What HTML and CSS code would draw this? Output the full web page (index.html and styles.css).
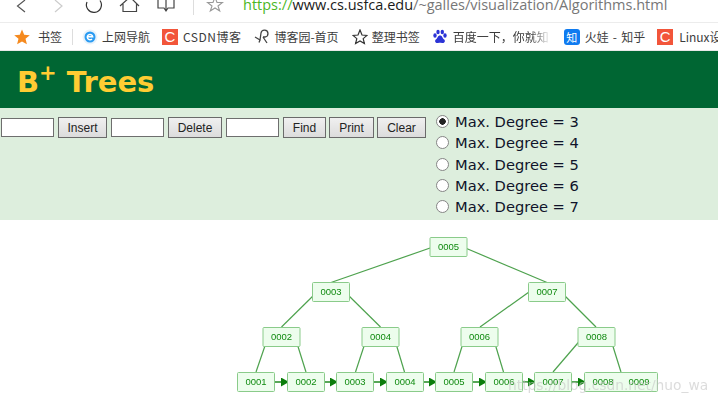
FILE: index.html
```html
<!DOCTYPE html>
<html lang="en">
<head>
<meta charset="utf-8">
<title>B+ Trees</title>
<link rel="stylesheet" href="styles.css">
</head>
<body>
<div class="toolbar">
  <svg class="tb-icons" width="200" height="22" viewBox="0 0 200 22" fill="none">
    <path d="M25 0 L17.500 6 L25 12" stroke="#555" stroke-width="1.200"/>
    <path d="M55 0 L62 6 L55 12" stroke="#ccc" stroke-width="1.200"/>
    <path d="M100 0.500 A7.500 7.500 0 1 1 87 2" stroke="#333" stroke-width="1.200"/>
    <path d="M120 6 L130 -3 L139 6 M123 4 V11.500 H136.500 V4" stroke="#444" stroke-width="1.200"/>
    <path d="M158 0 V8 H164 L166 11 L168 8 H174 V0 M166 0 V11" stroke="#444" stroke-width="1.200"/>
  </svg>
  <span class="tb-sep"></span>
  <svg class="tb-star" width="18" height="14" viewBox="0 0 18 14" fill="none"><path d="M9 -3 L11 2.500 L16.500 2.500 L12 6 L13.700 11 L9 8 L4.300 11 L6 6 L1.500 2.500 L7 2.500 Z" stroke="#999" stroke-width="1.100"/></svg>
  <span class="url"><span class="https">https</span><span class="slashes">://</span><span class="host">www.cs.usfca.edu</span><span class="path">/~galles/visualization/Algorithms.html</span></span>
</div>
<div class="bookmarks">
  <span class="bm bm-first"><svg width="16" height="16" viewBox="0 0 16 16"><path d="M8 0.500 L10.200 5.800 L15.800 6.200 L11.500 9.800 L12.900 15.300 L8 12.400 L3.100 15.300 L4.500 9.800 L0.200 6.200 L5.800 5.800 Z" fill="#f58a1f"/></svg><span class="bm-t">书签</span></span>
  <span class="bm-sep"></span>
  <span class="bm bm-e"><svg width="16" height="16" viewBox="0 0 16 16"><circle cx="8" cy="8" r="7.500" fill="#e9f3fb"/><circle cx="8" cy="8" r="5.500" fill="#2a9bf2"/><path d="M5.300 7.800 H10.700 A2.700 2.700 0 1 0 10 10" fill="none" stroke="#fff" stroke-width="1.500"/></svg><span class="bm-t">上网导航</span></span>
  <span class="bm bm-c"><span class="ci">C</span><span class="bm-t">CSDN博客</span></span>
  <span class="bm bm-cn"><svg width="16" height="16" viewBox="0 0 16 16" fill="none"><path d="M1 8 L6 11 L7 4 A3.500 3.500 0 1 1 11 8 L9 8 M9 8 L13 14 M6 11 L5 13.500" stroke="#444" stroke-width="1.300"/></svg><span class="bm-t">博客园-首页</span></span>
  <span class="bm bm-s"><svg width="16" height="16" viewBox="0 0 16 16" fill="none"><path d="M8 1 L10 6 L15 6.400 L11.200 9.600 L12.400 14.500 L8 11.900 L3.600 14.500 L4.800 9.600 L1 6.400 L6 6 Z" stroke="#333" stroke-width="1.200"/></svg><span class="bm-t">整理书签</span></span>
  <span class="bm bm-b"><svg width="14" height="16" viewBox="0 0 14 16" fill="#2b33d6"><ellipse cx="2" cy="6.500" rx="1.700" ry="2.200"/><ellipse cx="5" cy="3" rx="1.700" ry="2.200"/><ellipse cx="9.300" cy="3" rx="1.700" ry="2.200"/><ellipse cx="12" cy="6.500" rx="1.700" ry="2.200"/><path d="M7 6.500 C4.500 6.500 5 9 2.800 10.500 C1.200 12 2.500 14.500 5 14 C6.500 13.700 7.500 13.700 9 14 C11.500 14.500 12.800 12 11.200 10.500 C9 9 9.500 6.500 7 6.500 Z"/></svg><span class="bm-t bm-fade">百度一下，你就知</span></span>
  <span class="bm bm-z"><span class="zi">知</span><span class="bm-t">火娃 - 知乎</span></span>
  <span class="bm bm-l"><span class="ci">C</span><span class="bm-t">Linux设</span></span>
</div>
<header class="title"><h1>B<sup>+</sup> Trees</h1></header>
<section class="controls">
  <div class="actions">
    <input class="field" type="text" aria-label="Insert value">
    <button class="b-insert" type="button">Insert</button>
    <input class="field" type="text" aria-label="Delete value">
    <button class="b-delete" type="button">Delete</button>
    <input class="field" type="text" aria-label="Find value">
    <button class="b-find" type="button">Find</button>
    <button class="b-print" type="button">Print</button>
    <button class="b-clear" type="button">Clear</button>
  </div>
  <div class="degrees">
    <label class="degree"><input type="radio" name="deg" checked>Max. Degree = 3</label>
    <label class="degree"><input type="radio" name="deg">Max. Degree = 4</label>
    <label class="degree"><input type="radio" name="deg">Max. Degree = 5</label>
    <label class="degree"><input type="radio" name="deg">Max. Degree = 6</label>
    <label class="degree"><input type="radio" name="deg">Max. Degree = 7</label>
  </div>
</section>
<main class="canvas">
  <svg class="tree" width="718" height="182" viewBox="0 220 718 182">
    <defs>
      <marker id="arr" markerWidth="8" markerHeight="9" refX="7" refY="4.500" orient="auto" markerUnits="userSpaceOnUse"><path d="M0 0 L8 4.500 L0 9 Z" fill="#0a7d0a"/></marker>
    </defs>
    <g class="edges">
      <path d="M433 247 L331 282.500"/><path d="M463 247 L547 282.500"/>
      <path d="M317 292 L281.500 327"/><path d="M345 292 L380.500 327"/>
      <path d="M529 292 L480 327"/><path d="M561 292 L596 327"/>
      <path d="M268 337 L256 372"/><path d="M295 337 L306 372"/>
      <path d="M367 337 L355.500 372"/><path d="M394 337 L404.500 372"/>
      <path d="M465 337 L454 372"/><path d="M493 337 L503.500 372"/>
      <path d="M583 337 L553 372"/><path d="M610 337 L621 372"/>
    </g>
    <g class="links">
      <path d="M270 382 L288 382" marker-end="url(#arr)"/>
      <path d="M319 382 L337 382" marker-end="url(#arr)"/>
      <path d="M369 382 L387 382" marker-end="url(#arr)"/>
      <path d="M418 382 L436 382" marker-end="url(#arr)"/>
      <path d="M468 382 L486 382" marker-end="url(#arr)"/>
      <path d="M517 382 L535 382" marker-end="url(#arr)"/>
      <path d="M567 382 L585 382" marker-end="url(#arr)"/>
    </g>
    <g class="nodes">
      <rect x="430" y="237.500" width="37" height="19"/>
      <rect x="312.500" y="282.500" width="37" height="19"/><rect x="528.500" y="282.500" width="37" height="19"/>
      <rect x="263" y="327.500" width="37" height="19"/><rect x="362" y="327.500" width="37" height="19"/><rect x="461" y="327.500" width="37" height="19"/><rect x="578" y="327.500" width="37" height="19"/>
      <rect x="237.500" y="372.500" width="37" height="19"/><rect x="287.500" y="372.500" width="37" height="19"/><rect x="336.500" y="372.500" width="37" height="19"/><rect x="386.500" y="372.500" width="37" height="19"/><rect x="435.500" y="372.500" width="37" height="19"/><rect x="485.500" y="372.500" width="37" height="19"/><rect x="534.500" y="372.500" width="37" height="19"/><rect x="584.500" y="372.500" width="73" height="19"/>
    </g>
    <g class="labels">
      <text x="448.500" y="246.500">0005</text>
      <text x="331" y="291.500">0003</text><text x="547" y="291.500">0007</text>
      <text x="281.500" y="336.500">0002</text><text x="380.500" y="336.500">0004</text><text x="479.500" y="336.500">0006</text><text x="596.500" y="336.500">0008</text>
      <text x="256" y="381.500">0001</text><text x="306" y="381.500">0002</text><text x="355" y="381.500">0003</text><text x="405" y="381.500">0004</text><text x="454" y="381.500">0005</text><text x="504" y="381.500">0006</text><text x="553" y="381.500">0007</text><text x="603" y="381.500">0008</text><text x="639" y="381.500">0009</text>
    </g>
    <text class="watermark" x="508" y="390">https://blog.csdn.net/huo_wa</text>
  </svg>
</main>
</body>
</html>
```
FILE: styles.css
```css
html, body { margin: 0; padding: 0; background: #fff; }
body { width: 718px; height: 402px; overflow: hidden; font-family: "Liberation Sans", Arial, sans-serif; }

.toolbar { position: relative; height: 22px; background: #fff; border-bottom: 1px solid #ececec; overflow: hidden; }
.tb-icons { position: absolute; left: 0; top: 0; }
.tb-sep { position: absolute; left: 193px; top: 0; width: 1px; height: 15px; background: #ddd; }
.tb-star { position: absolute; left: 206px; top: 0; }
.url { position: absolute; left: 243px; top: -4px; font: 14.500px/18px "Open Sans", sans-serif; white-space: nowrap; }
.https { color: #4cb71f; }
.slashes { color: #4cb71f; }
.host { color: #1a1a1a; }
.path { color: #777; }

.bookmarks { display: flex; align-items: center; height: 27px; background: #fff; border-bottom: 1px solid #e8e8e8; overflow: hidden; white-space: nowrap; padding-left: 14px; font: 12px/16px "Noto Sans CJK SC", "Liberation Sans", sans-serif; color: #3c3c3c; }
.bm { display: inline-flex; align-items: center; flex: none; }
.bm-t { margin-left: 6px; }
.bm-first .bm-t { margin-left: 8px; }
.bm-e .bm-t, .bm-cn .bm-t, .bm-s .bm-t { margin-left: 4px; }
.bm-c .bm-t, .bm-z .bm-t { margin-left: 5px; }
.bm-c .bm-t { letter-spacing: 0.500px; }
.bm-z .bm-t { word-spacing: 1.500px; }
.bm-sep { width: 1px; height: 16px; background: #ddd; margin: 0 9px 0 10px; flex: none; }
.bm-c, .bm-l { margin-left: 12px; }
.bm-cn, .bm-s, .bm-b, .bm-z { margin-left: 13px; }
.ci { display: block; width: 16px; height: 16px; background: #f2553a; color: #fff; font: 15px/16px "Liberation Sans", sans-serif; text-align: center; }
.zi { display: block; width: 16px; height: 16px; border-radius: 3px; background: #0f7bf0; color: #fff; font: 11px/16px "Noto Sans CJK SC", sans-serif; text-align: center; }
.bm-fade { width: 98px; overflow: hidden; -webkit-mask-image: linear-gradient(90deg, #000 80%, transparent); mask-image: linear-gradient(90deg, #000 80%, transparent); }

.title { box-sizing: border-box; height: 57px; background: #006633; display: flex; align-items: center; padding: 4px 0 0 17px; }
.title h1 { margin: 0; color: #ffcc33; font: bold 29px/34px "DejaVu Sans", sans-serif; }
.title sup { font-size: 21px; line-height: 0; vertical-align: 12px; }

.controls { height: 112px; background: #ddeedd; display: flex; align-items: flex-start; box-sizing: border-box; }
.actions { display: flex; align-items: center; gap: 4px; padding: 9px 0 0 1px; }
.field { box-sizing: border-box; width: 53px; height: 19px; margin: 0; padding: 1px 2px; background: #fff; border: 1px solid #6e6e6e; border-radius: 0; }
.actions button { box-sizing: border-box; height: 21px; margin: 0; padding: 0; background: linear-gradient(#f0f0f0, #dcdcdc); border: 1px solid #6a6a6a; border-radius: 0; color: #222; font: 12px/18px "Liberation Sans", sans-serif; }
.actions .b-insert { width: 49px; }
.actions .b-delete { width: 54px; }
.actions .b-find { width: 43px; }
.actions .b-print { width: 45px; margin-left: -1px; }
.actions .b-clear { width: 49px; margin-left: -1px; }
.degrees { display: flex; flex-direction: column; padding: 3px 0 0 0; margin-left: 10px; }
.degree { display: flex; align-items: center; height: 21.250px; font: 14.670px/21px "DejaVu Sans", sans-serif; color: #10142a; white-space: nowrap; }
.degree input { appearance: none; -webkit-appearance: none; box-sizing: border-box; width: 13px; height: 13px; margin: 0 6px 0 0; background: #fff; border: 1px solid #858585; border-radius: 50%; }
.degree input:checked { background: radial-gradient(circle, #222 0 3px, #fff 3.500px); }

.canvas { height: 182px; background: #fff; }
.tree { display: block; filter: blur(0.300px); }
.edges path { fill: none; stroke: #4ea24e; stroke-width: 1.200; }
.links path { fill: none; stroke: #1f8a1f; stroke-width: 1.500; }
.nodes rect { fill: #edfded; stroke: #8acb8a; stroke-width: 1; rx: 1px; }
.labels text { fill: #108a10; font: 9.500px "Liberation Sans", sans-serif; text-anchor: middle; dominant-baseline: central; }
.watermark { fill: #c4c4c4; fill-opacity: 0.600; font: 13.800px "DejaVu Sans", sans-serif; }
```
